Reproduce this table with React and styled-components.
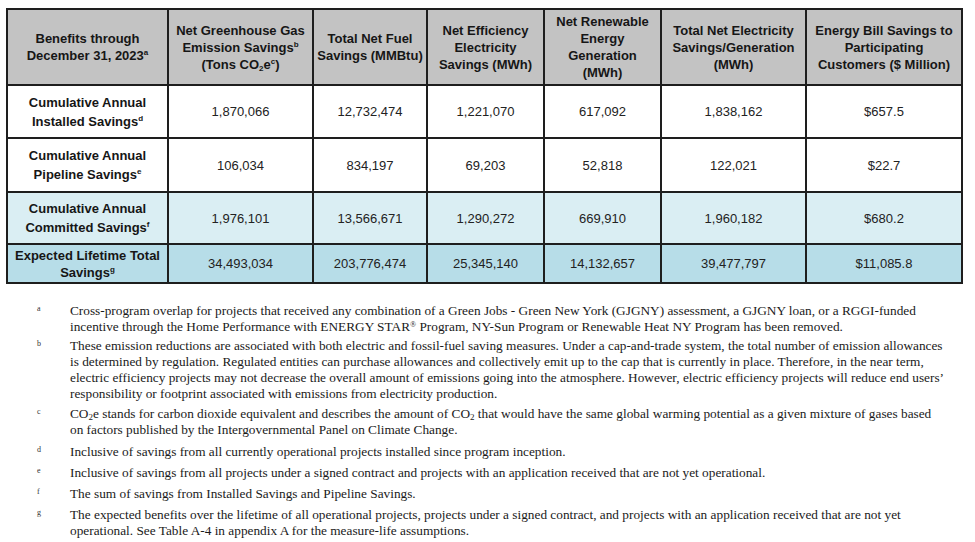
import React from "react";
import styled, { createGlobalStyle } from "styled-components";

const Global = createGlobalStyle`
  html, body { margin: 0; padding: 0; background: #ffffff; }
  body { font-family: "Liberation Sans", Arial, sans-serif; }
`;

const Page = styled.div`
  padding: 8px 0 0 6px;
  width: 975px;
  box-sizing: border-box;
`;

const Table = styled.table`
  width: 957px;
  table-layout: fixed;
  border-collapse: collapse;
  border: 2px solid #1e1e1e;
  font-family: "Liberation Sans", Arial, sans-serif;
  font-size: 13px;
`;

const HeadRow = styled.tr`
  height: 76px;
  background: #c3c3c3;
`;

const Row = styled.tr`
  height: ${(p) => p.$h}px;
  background: ${(p) => p.$bg};
`;

const Th = styled.th`
  border: 2px solid #1e1e1e;
  padding: 0;
  font-weight: bold;
  color: #161616;
  line-height: 17px;
  text-align: center;
  vertical-align: middle;
  white-space: nowrap;
`;

const Label = styled.td`
  border: 2px solid #1e1e1e;
  padding: 0;
  font-weight: bold;
  color: #161616;
  line-height: ${(p) => (p.$tight ? 17 : 19)}px;
  text-align: center;
  vertical-align: middle;
  white-space: nowrap;
`;

const Value = styled.td`
  border: 2px solid #1e1e1e;
  padding: 0 4px;
  color: #222;
  text-align: center;
  vertical-align: middle;
`;

const Sup = styled.sup`
  font-size: 8px;
  vertical-align: 5px;
  line-height: 0;
`;

const Sub = styled.sub`
  font-size: 8px;
  vertical-align: -2px;
  line-height: 0;
`;

const Notes = styled.div`
  margin-top: 19px;
  padding-left: 31px;
  display: flex;
  flex-direction: column;
  font-family: "Liberation Serif", "Times New Roman", serif;
  font-size: 13.3px;
  line-height: 16px;
  color: #1a1a1a;
`;

const Note = styled.div`
  display: grid;
  grid-template-columns: 33px 1fr;
  margin-top: ${(p) => p.$space || 0}px;
`;

const Mark = styled.span`
  font-size: 8px;
  line-height: 12px;
  color: #333;
`;

const NoteText = styled.div`
  white-space: nowrap;
`;

const NSub = styled.sub`
  font-size: 9px;
  vertical-align: -2px;
  line-height: 0;
`;

const NSup = styled.sup`
  font-size: 8px;
  vertical-align: 4px;
  line-height: 0;
`;

const cols = [161, 145, 114, 117, 117, 145, 156];

const rows = [
  {
    h: 53,
    bg: "#ffffff",
    label: ["Cumulative Annual", "Installed Savings", "d"],
    vals: ["1,870,066", "12,732,474", "1,221,070", "617,092", "1,838,162", "$657.5"],
  },
  {
    h: 54,
    bg: "#ffffff",
    label: ["Cumulative Annual", "Pipeline Savings", "e"],
    vals: ["106,034", "834,197", "69,203", "52,818", "122,021", "$22.7"],
  },
  {
    h: 52,
    bg: "#daeef3",
    label: ["Cumulative Annual", "Committed Savings", "f"],
    vals: ["1,976,101", "13,566,671", "1,290,272", "669,910", "1,960,182", "$680.2"],
  },
  {
    h: 39,
    bg: "#b7dde8",
    tight: true,
    label: ["Expected Lifetime Total", "Savings", "g"],
    vals: ["34,493,034", "203,776,474", "25,345,140", "14,132,657", "39,477,797", "$11,085.8"],
  },
];

const notes = [
  {
    m: "a",
    s: 0,
    lines: [
      "Cross-program overlap for projects that received any combination of a Green Jobs - Green New York (GJGNY) assessment, a GJGNY loan, or a RGGI-funded",
      <>incentive through the Home Performance with ENERGY STAR<NSup>®</NSup> Program, NY-Sun Program or Renewable Heat NY Program has been removed.</>,
    ],
  },
  {
    m: "b",
    s: 3,
    lines: [
      "These emission reductions are associated with both electric and fossil-fuel saving measures. Under a cap-and-trade system, the total number of emission allowances",
      "is determined by regulation. Regulated entities can purchase allowances and collectively emit up to the cap that is currently in place. Therefore, in the near term,",
      "electric efficiency projects may not decrease the overall amount of emissions going into the atmosphere. However, electric efficiency projects will reduce end users’",
      "responsibility or footprint associated with emissions from electricity production.",
    ],
  },
  {
    m: "c",
    s: 4,
    lines: [
      <>CO<NSub>2</NSub>e stands for carbon dioxide equivalent and describes the amount of CO<NSub>2</NSub> that would have the same global warming potential as a given mixture of gases based</>,
      "on factors published by the Intergovernmental Panel on Climate Change.",
    ],
  },
  {
    m: "d",
    s: 6,
    lines: ["Inclusive of savings from all currently operational projects installed since program inception."],
  },
  {
    m: "e",
    s: 5,
    lines: ["Inclusive of savings from all projects under a signed contract and projects with an application received that are not yet operational."],
  },
  {
    m: "f",
    s: 5,
    lines: ["The sum of savings from Installed Savings and Pipeline Savings."],
  },
  {
    m: "g",
    s: 5,
    lines: [
      "The expected benefits over the lifetime of all operational projects, projects under a signed contract, and projects with an application received that are not yet",
      "operational. See Table A-4 in appendix A for the measure-life assumptions.",
    ],
  },
];

export default function App() {
  return (
    <Page>
      <Global />
      <Table>
        <colgroup>
          {cols.map((w, i) => (
            <col key={i} style={{ width: w }} />
          ))}
        </colgroup>
        <thead>
          <HeadRow>
            <Th>
              Benefits through
              <br />
              December 31, 2023<Sup>a</Sup>
            </Th>
            <Th>
              Net Greenhouse Gas
              <br />
              Emission Savings<Sup>b</Sup>
              <br />
              (Tons CO<Sub>2</Sub>e<Sup>c</Sup>)
            </Th>
            <Th>
              Total Net Fuel
              <br />
              Savings (MMBtu)
            </Th>
            <Th>
              Net Efficiency
              <br />
              Electricity
              <br />
              Savings (MWh)
            </Th>
            <Th>
              Net Renewable
              <br />
              Energy
              <br />
              Generation
              <br />
              (MWh)
            </Th>
            <Th>
              Total Net Electricity
              <br />
              Savings/Generation
              <br />
              (MWh)
            </Th>
            <Th>
              Energy Bill Savings to
              <br />
              Participating
              <br />
              Customers ($ Million)
            </Th>
          </HeadRow>
        </thead>
        <tbody>
          {rows.map((r, i) => (
            <Row key={i} $h={r.h} $bg={r.bg}>
              <Label $tight={r.tight}>
                {r.label[0]}
                <br />
                {r.label[1]}
                <Sup>{r.label[2]}</Sup>
              </Label>
              {r.vals.map((v, j) => (
                <Value key={j}>{v}</Value>
              ))}
            </Row>
          ))}
        </tbody>
      </Table>
      <Notes>
        {notes.map((n) => (
          <Note key={n.m} $space={n.s}>
            <Mark>{n.m}</Mark>
            <NoteText>
              {n.lines.map((l, k) => (
                <div key={k}>{l}</div>
              ))}
            </NoteText>
          </Note>
        ))}
      </Notes>
    </Page>
  );
}
